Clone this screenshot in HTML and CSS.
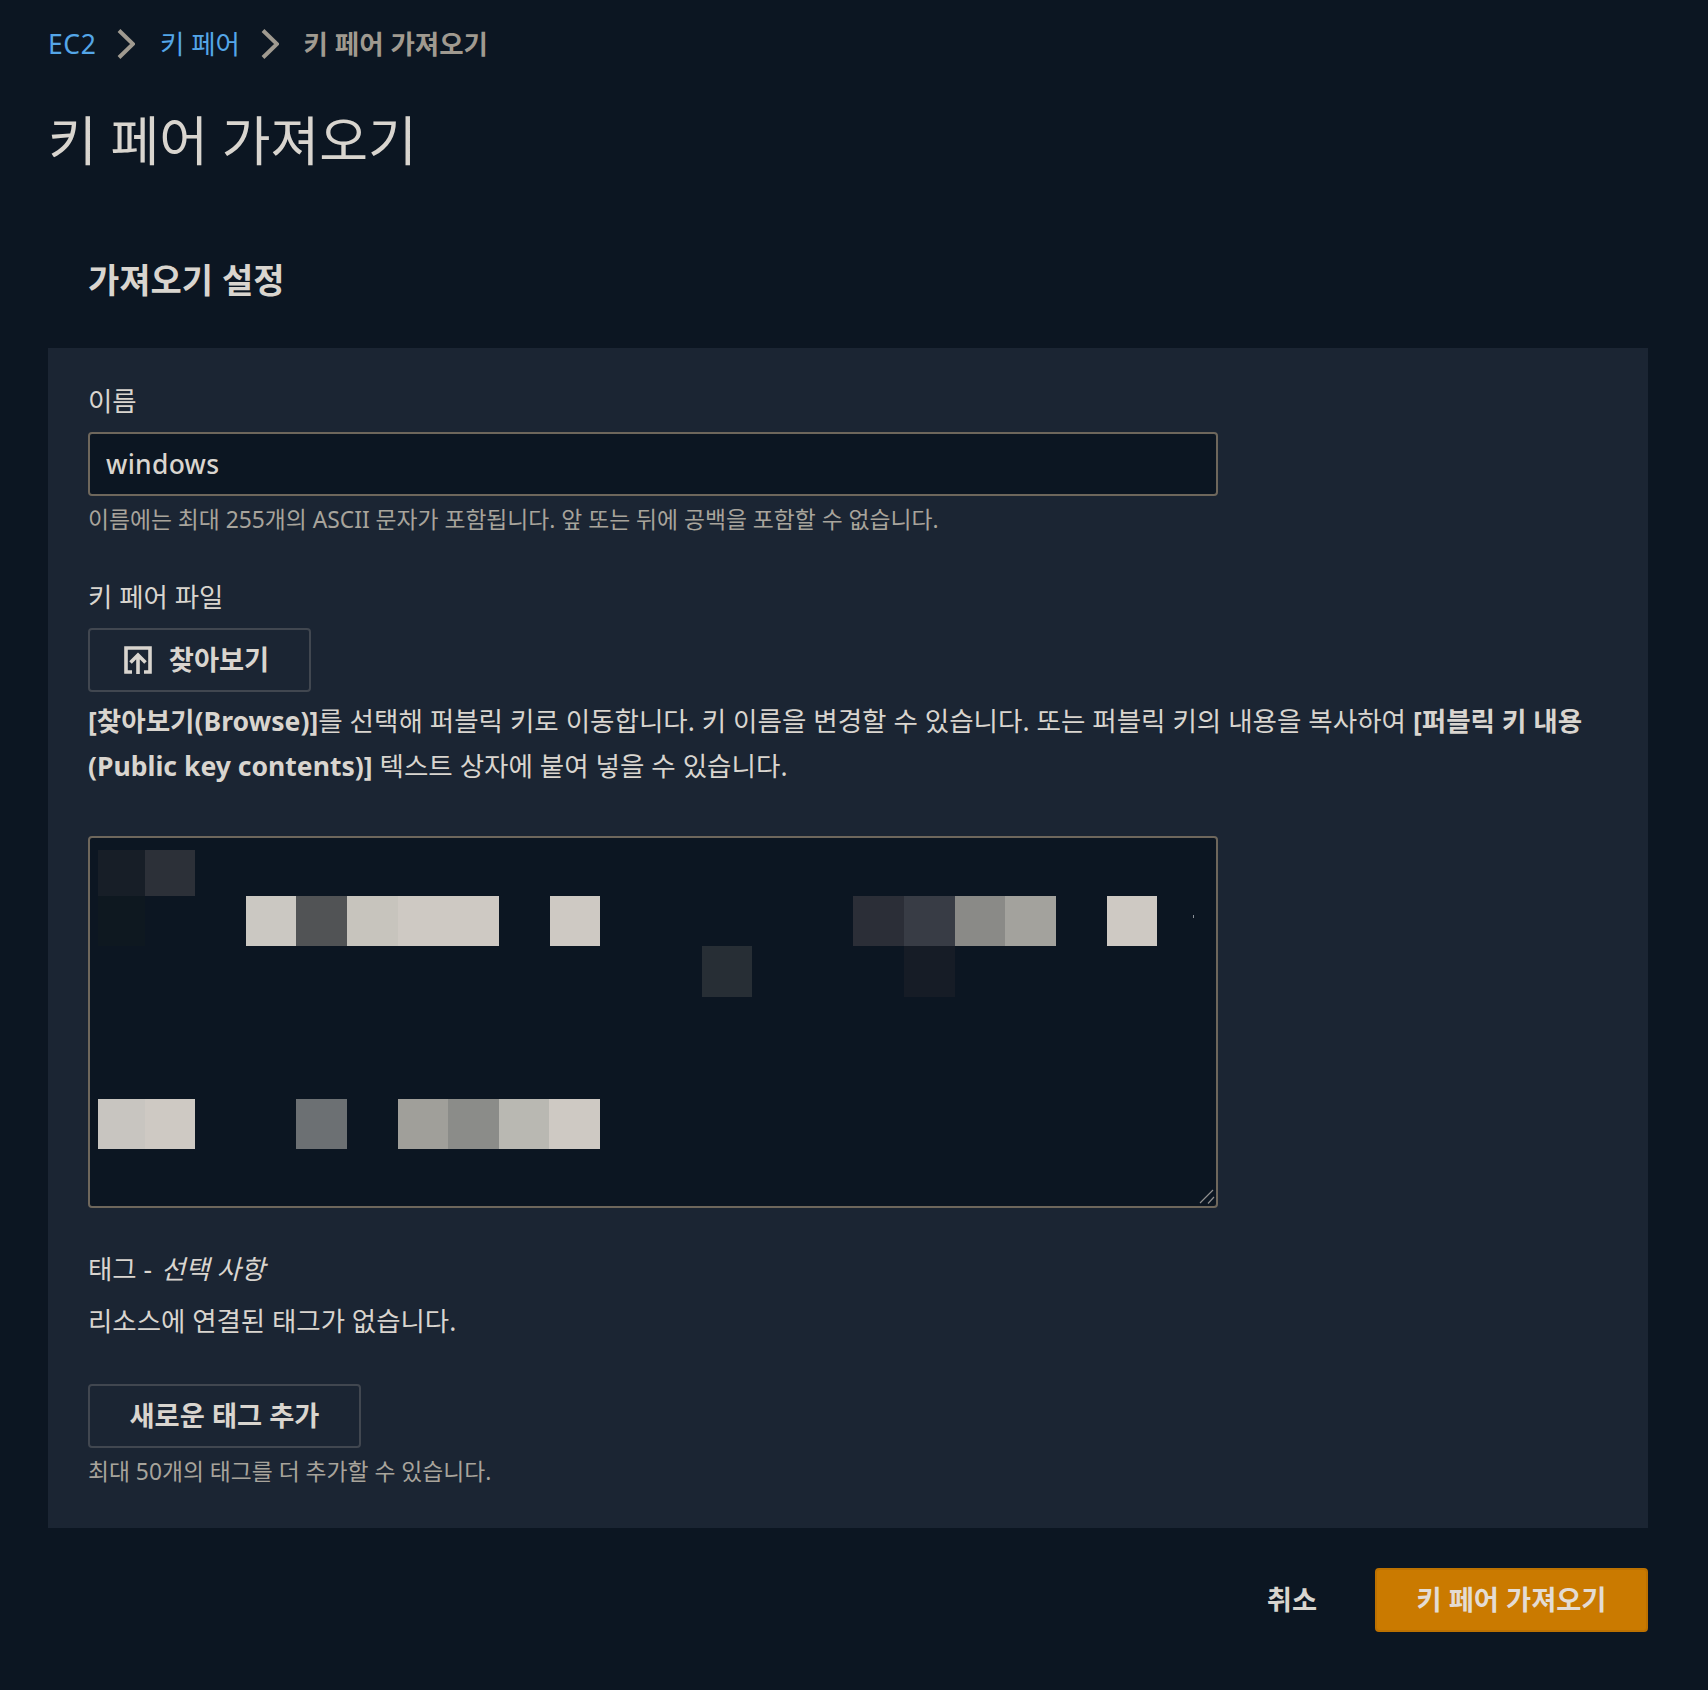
FILE: index.html
```html
<!DOCTYPE html>
<html lang="ko">
<head>
  <meta charset="UTF-8">
  <meta name="viewport" content="width=device-width, initial-scale=1.0">
  <title>키 페어 가져오기</title>
  <link rel="stylesheet" href="styles.css">
</head>
<body>
  <div class="page">
    <!-- Breadcrumb -->
    <nav class="crumbs">
      <a class="service" href="#">EC2</a>
      <svg class="chevron" viewBox="0 0 18 30"><path d="M2 1.500 16 15 2 28.500"/></svg>
      <a href="#">키 페어</a>
      <svg class="chevron" viewBox="0 0 18 30"><path d="M2 1.500 16 15 2 28.500"/></svg>
      <span class="current">키 페어 가져오기</span>
    </nav>

    <h1>키 페어 가져오기</h1>
    <h2>가져오기 설정</h2>

    <section class="card">
      <label class="field-label first">이름</label>
      <input class="name-input" type="text" value="windows">
      <p class="hint">이름에는 최대 255개의 ASCII 문자가 포함됩니다. 앞 또는 뒤에 공백을 포함할 수 없습니다.</p>

      <label class="field-label spaced">키 페어 파일</label>
      <button class="btn btn-browse">
        <svg class="upload-icon" viewBox="0 0 28 28"><path d="M8 26H2V2h24v24h-6"/><path d="M14 28V9M6.500 16.500 14 9l7.500 7.500"/></svg>
        찾아보기
      </button>
      <p class="desc"><b>[찾아보기(Browse)]</b>를 선택해 퍼블릭 키로 이동합니다. 키 이름을 변경할 수 있습니다. 또는 퍼블릭 키의 내용을 복사하여 <b>[퍼블릭 키 내용 (Public key contents)]</b> 텍스트 상자에 붙여 넣을 수 있습니다.</p>

      <!-- Key contents, pixelated in the screenshot -->
      <div class="key-box">
        <div class="mosaic">
          <i class="m1"></i><i class="m2"></i><i class="m3"></i><i class="m4"></i><i class="m5"></i>
          <i class="m6"></i><i class="m7"></i><i class="m8"></i><i class="m9"></i><i class="m10"></i>
          <i class="m11"></i><i class="m12"></i><i class="m13"></i><i class="m14"></i><i class="m15"></i>
          <i class="m16"></i><i class="m17"></i><i class="m18"></i><i class="m19"></i><i class="m20"></i>
          <i class="m21"></i>
        </div>
        <span class="speck"></span>
        <svg class="grip" viewBox="0 0 16 16"><path d="M1 14 14 1M9 14.500 15 8"/></svg>
      </div>

      <label class="field-label spaced">태그 - <em>선택 사항</em></label>
      <p class="no-tags">리소스에 연결된 태그가 없습니다.</p>
      <button class="btn btn-add">새로운 태그 추가</button>
      <p class="hint">최대 50개의 태그를 더 추가할 수 있습니다.</p>
    </section>

    <footer class="actions">
      <button class="btn-link">취소</button>
      <button class="btn-primary">키 페어 가져오기</button>
    </footer>
  </div>
</body>
</html>
```

FILE: styles.css
```css
/* Basic layout */
body {
  margin: 0;
  background: #0c1622;
  color: #d9d5cf;
  font-family: "Noto Sans", "Noto Sans CJK KR", sans-serif;
  font-size: 26.45px;
  line-height: 36px;
}
.page {
  padding: 22px 60px 58px 48px;
}

/* Breadcrumb */
.crumbs {
  display: flex;
  align-items: center;
  gap: 23px;
  height: 44px;
  font-size: 26.5px;
}
.crumbs a {
  color: #54a6e8;
  text-decoration: none;
}
.crumbs .service {
  letter-spacing: 0.6px;
}
.crumbs .current {
  color: #a09a90;
  font-weight: 700;
}
.chevron {
  width: 18px;
  height: 30px;
  margin: 0 1.5px 0 -2px;
  fill: none;
  stroke: #a09a90;
  stroke-width: 4;
}

/* Headings */
h1 {
  margin: 43px 0 0;
  font-size: 53px;
  line-height: 64px;
  font-weight: 400;
}
h2 {
  margin: 85px 0 46px 40px;
  font-size: 34px;
  line-height: 44px;
  font-weight: 700;
}

/* Settings card */
.card {
  background: #1b2533;
  padding: 35px 40px 40px;
}
.field-label {
  display: block;
  margin-bottom: 13px;
}
.field-label.spaced {
  margin-top: 43px;
}
.field-label em {
  margin-left: 2px;
  font-style: italic;
}
.name-input {
  display: block;
  box-sizing: border-box;
  width: 1130px;
  height: 64px;
  padding: 0 16px;
  background: #0c1622;
  border: 2px solid #6e675c;
  border-radius: 4px;
  color: #d9d5cf;
  font: inherit;
  font-weight: 500;
  letter-spacing: 0.3px;
}
.hint {
  margin: 8px 0 0;
  font-size: 22.8px;
  line-height: 32px;
  color: #a8a49c;
}

/* Buttons */
.btn {
  display: flex;
  align-items: center;
  justify-content: center;
  box-sizing: border-box;
  height: 64px;
  background: transparent;
  border: 2px solid #414750;
  border-radius: 4px;
  color: #d9d5cf;
  font: inherit;
  font-size: 27.3px;
  font-weight: 700;
}
.btn-browse {
  width: 223px;
  gap: 17px;
  padding-right: 12px;
}
.btn-add {
  width: 273px;
  margin-top: 45px;
}
.upload-icon {
  width: 28px;
  height: 28px;
  fill: none;
  stroke: #d9d5cf;
  stroke-width: 3.6;
}
.btn-link {
  padding: 0;
  background: none;
  border: none;
  color: #d9d5cf;
  font: inherit;
  font-size: 27.3px;
  font-weight: 700;
}
.btn-primary {
  box-sizing: border-box;
  width: 273px;
  height: 64px;
  background: #ca7a00;
  border: 2px solid #bd7100;
  border-radius: 4px;
  color: #e4dcd3;
  font: inherit;
  font-size: 27.3px;
  font-weight: 700;
}

/* Description text */
.desc {
  margin: 7px 0 0;
  font-size: 26.55px;
  line-height: 44.6px;
}
.no-tags {
  margin: 0;
  padding-top: 3px;
}

/* Public key box */
.key-box {
  position: relative;
  box-sizing: border-box;
  width: 1130px;
  height: 372px;
  margin-top: 48px;
  background: #0c1622;
  border: 2px solid #6e675c;
  border-radius: 4px;
  padding: 12px 0 0 8px;
}
.mosaic {
  display: grid;
  grid-template-columns: 46.5px repeat(20, 50.65px);
  grid-template-rows: 46px 50px 51px 102px 50px;
}
.m1 { grid-area: 1 / 1; background: #171e27; }
.m2 { grid-area: 1 / 2; background: #2c3038; }
.m3 { grid-area: 2 / 1; background: #0e1820; }
.m4 { grid-area: 2 / 4; background: #cbc8c2; }
.m5 { grid-area: 2 / 5; background: #515355; }
.m6 { grid-area: 2 / 6; background: #c7c4bd; }
.m7 { grid-area: 2 / 7 / 3 / 9; background: #cec9c3; }
.m8 { grid-area: 2 / 10; background: #cec9c3; }
.m9 { grid-area: 2 / 16; background: #2b2e37; }
.m10 { grid-area: 2 / 17; background: #383c45; }
.m11 { grid-area: 2 / 18; background: #8a8a87; }
.m12 { grid-area: 2 / 19; background: #a3a29d; }
.m13 { grid-area: 2 / 21; background: #cec9c3; }
.m14 { grid-area: 3 / 13; background: #272e35; }
.m15 { grid-area: 3 / 17; background: #161c26; }
.m16 { grid-area: 5 / 1; background: #c8c5c0; }
.m17 { grid-area: 5 / 2; background: #cec9c3; }
.m18 { grid-area: 5 / 5; background: #6c7073; }
.m19 { grid-area: 5 / 7; background: #a09f9a; }
.m20 { grid-area: 5 / 8; background: #8b8c89; }
.m21 { grid-area: 5 / 9 / 6 / 11; background: linear-gradient(90deg, #b9b8b2 50%, #cec9c3 50%); }
.speck {
  position: absolute;
  left: 1103px;
  top: 77px;
  width: 1px;
  height: 3px;
  background: #8a8f96;
}
.grip {
  position: absolute;
  right: 1px;
  bottom: 1px;
  width: 16px;
  height: 16px;
  fill: none;
  stroke: #8f8f8f;
  stroke-width: 1.2;
}

/* Footer */
.actions {
  display: flex;
  justify-content: flex-end;
  align-items: center;
  gap: 58px;
  margin-top: 40px;
}
```
